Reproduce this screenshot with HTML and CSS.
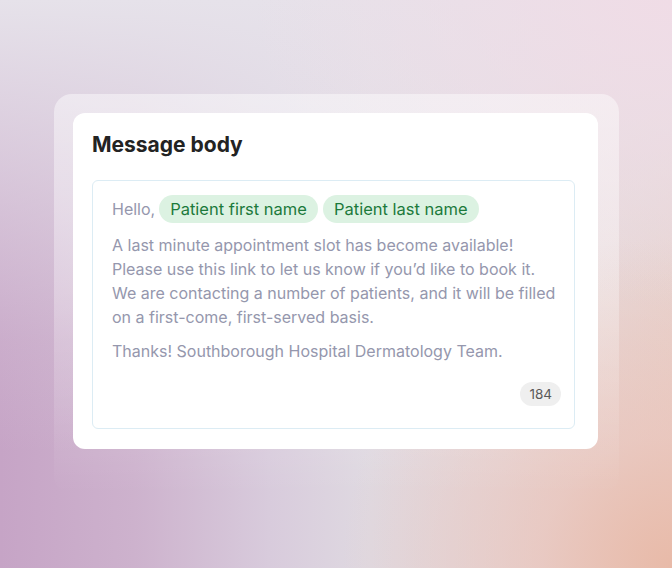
FILE: index.html
```html
<!DOCTYPE html>
<html>
<head>
<meta charset="utf-8">
<link rel="stylesheet" href="styles.css">
</head>
<body>
<div class="stage">
  <div class="frame">
    <div class="card">
      <h1 class="title">Message body</h1>
      <div class="editor">
        <div class="greeting">
          <span class="hello">Hello,</span>
          <span class="chip">Patient first name</span>
          <span class="chip">Patient last name</span>
        </div>
        <p class="para">A last minute appointment slot has become available! Please use this link to let us know if you’d like to book it. We are contacting a number of patients, and it will be filled on a first-come, first-served basis.</p>
        <p class="para">Thanks! Southborough Hospital Dermatology Team.</p>
        <div class="footer"><span class="count">184</span></div>
      </div>
    </div>
  </div>
</div>
</body>
</html>
```
FILE: styles.css
```css
* { box-sizing: border-box; }
html, body { margin: 0; padding: 0; }
body {
  width: 672px;
  height: 568px;
  overflow: hidden;
  font-family: Inter, "Noto Sans", sans-serif;
}
.stage {
  width: 672px;
  height: 568px;
  padding: 94px 53px 0 54px;
  background:
    radial-gradient(ellipse 330px 330px at 100% 100%, rgba(232,186,168,1) 0%, rgba(234,196,186,0.7) 40%, rgba(236,214,214,0) 100%),
    radial-gradient(ellipse 420px 300px at 100% 0%, rgba(240,220,230,1) 0%, rgba(238,226,234,0) 100%),
    linear-gradient(180deg, rgba(230,226,234,1) 0%, rgba(230,226,234,0.65) 25%, rgba(230,226,234,0.15) 60%, rgba(230,226,234,0) 80%),
    linear-gradient(90deg, #c6a4c6 0%, #cdb2cd 20%, #d8cbdc 40%, #dfd9e1 55%, #e4d8dc 75%, #e8cfc8 100%);
}
.frame {
  width: 565px;
  height: 400px;
  border-radius: 18px;
  padding: 19px 21px 19px 19px;
  background: linear-gradient(180deg, rgba(255,255,255,0.45) 0%, rgba(255,255,255,0.3) 50%, rgba(255,255,255,0) 100%);
}
.card {
  background: #fff;
  border-radius: 12px;
  padding: 17px 23px 20px 19px;
}
.title {
  margin: 0 0 20px 0;
  font-size: 21px;
  line-height: 30px;
  font-weight: 700;
  color: #232323;
}
.editor {
  border: 1px solid #dcecf4;
  border-radius: 6px;
  padding: 14px 13px 21px 19px;
  height: 249px;
}
.greeting {
  display: flex;
  align-items: center;
  height: 28px;
  margin-bottom: 10px;
}
.hello {
  font-size: 16px;
  color: #9597ad;
  margin-right: 4px;
}
.chip {
  background: #dcf2e2;
  color: #1c7a3c;
  font-size: 16.5px;
  line-height: 28px;
  padding: 0 11px;
  border-radius: 14px;
  margin-right: 5px;
}
.para {
  margin: 0 0 10px 0;
  max-width: 445px;
  font-size: 16px;
  line-height: 24px;
  color: #9597ad;
}
.footer {
  display: flex;
  justify-content: flex-end;
  margin-top: 19px;
}
.count {
  background: #efefef;
  color: #5a5a5a;
  font-size: 13.5px;
  line-height: 24px;
  padding: 0 9px;
  border-radius: 12px;
}
```
